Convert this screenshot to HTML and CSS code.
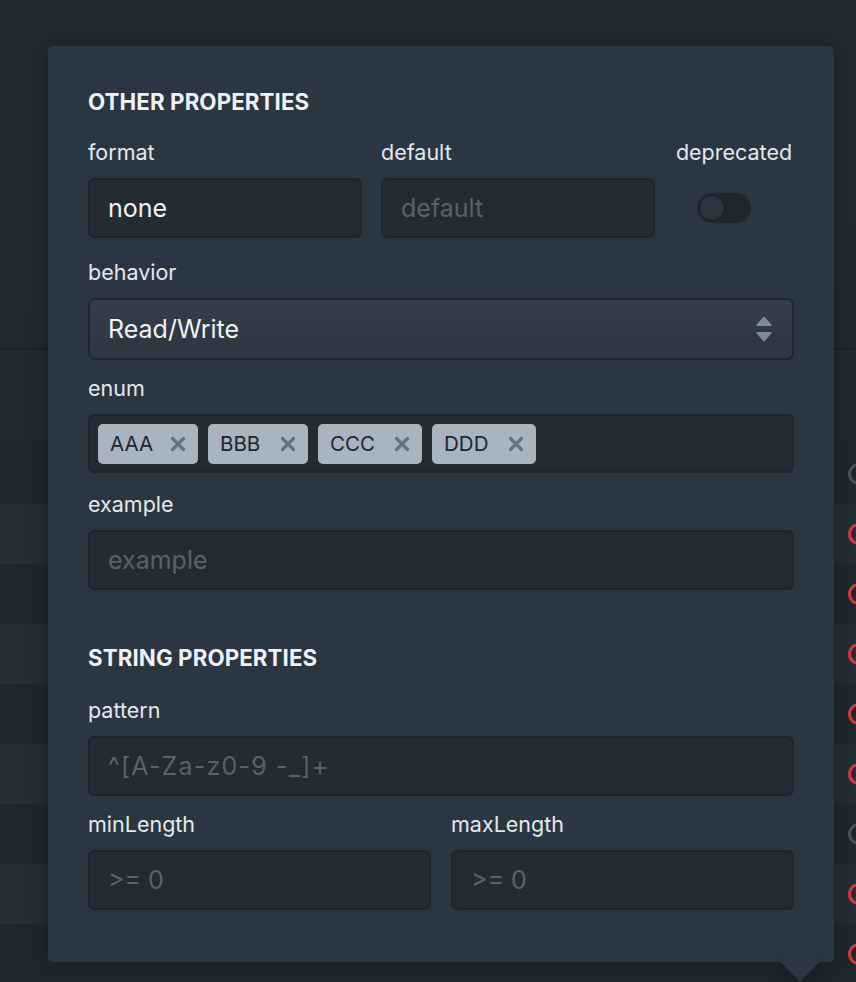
FILE: index.html
```html
<!DOCTYPE html>
<html>
<head>
<meta charset="utf-8">
<link rel="stylesheet" href="styles.css">
</head>
<body>
<div class="backdrop">
  <div class="bg-top"></div>
  <div class="bg-sub"></div>
  <div class="row dark"><span class="dot grey"></span></div>
  <div class="row light"><span class="dot red"></span></div>
  <div class="row dark"><span class="dot red"></span></div>
  <div class="row light"><span class="dot red"></span></div>
  <div class="row dark"><span class="dot red"></span></div>
  <div class="row light"><span class="dot red"></span></div>
  <div class="row dark"><span class="dot grey"></span></div>
  <div class="row light"><span class="dot red"></span></div>
  <div class="row dark"><span class="dot red"></span></div>
</div>

<div class="popover">
  <h2 class="section-title first">OTHER PROPERTIES</h2>

  <div class="grid3 gap-after-top">
    <div class="field">
      <label class="label">format</label>
      <div class="input"><span class="value">none</span></div>
    </div>
    <div class="field">
      <label class="label">default</label>
      <div class="input"><span class="placeholder">default</span></div>
    </div>
    <div class="field center">
      <label class="label">deprecated</label>
      <div class="toggle-wrap"><span class="toggle"><span class="knob"></span></span></div>
    </div>
  </div>

  <div class="field gap-after-select">
    <label class="label">behavior</label>
    <div class="select">
      <span class="value">Read/Write</span>
      <svg class="updown" width="16" height="26" viewBox="0 0 16 26">
        <path d="M7 1.2 Q8 0.2 9 1.2 L15.3 8.6 Q16 10 14.4 10 L1.6 10 Q0 10 0.7 8.6 Z" fill="#7d8b99"/>
        <path d="M7 24.8 Q8 25.8 9 24.8 L15.3 17.4 Q16 16 14.4 16 L1.6 16 Q0 16 0.7 17.4 Z" fill="#7d8b99"/>
      </svg>
    </div>
  </div>

  <div class="field gap-after-enum">
    <label class="label">enum</label>
    <div class="tags">
      <span class="tag">AAA<svg class="x" viewBox="0 0 16 16" width="16" height="16"><path d="M2.5 2.5 L13.5 13.5 M13.5 2.5 L2.5 13.5" stroke="#667280" stroke-width="3.2" stroke-linecap="round"/></svg></span>
      <span class="tag">BBB<svg class="x" viewBox="0 0 16 16" width="16" height="16"><path d="M2.5 2.5 L13.5 13.5 M13.5 2.5 L2.5 13.5" stroke="#667280" stroke-width="3.2" stroke-linecap="round"/></svg></span>
      <span class="tag wide">CCC<svg class="x" viewBox="0 0 16 16" width="16" height="16"><path d="M2.5 2.5 L13.5 13.5 M13.5 2.5 L2.5 13.5" stroke="#667280" stroke-width="3.2" stroke-linecap="round"/></svg></span>
      <span class="tag wide">DDD<svg class="x" viewBox="0 0 16 16" width="16" height="16"><path d="M2.5 2.5 L13.5 13.5 M13.5 2.5 L2.5 13.5" stroke="#667280" stroke-width="3.2" stroke-linecap="round"/></svg></span>
    </div>
  </div>

  <div class="field">
    <label class="label">example</label>
    <div class="input"><span class="placeholder">example</span></div>
  </div>

  <h2 class="section-title second">STRING PROPERTIES</h2>

  <div class="field gap-after-pattern">
    <label class="label">pattern</label>
    <div class="input"><span class="placeholder pattern">^[A-Za-z0-9 -_]+</span></div>
  </div>

  <div class="grid2">
    <div class="field">
      <label class="label">minLength</label>
      <div class="input"><span class="placeholder">&gt;= 0</span></div>
    </div>
    <div class="field">
      <label class="label">maxLength</label>
      <div class="input"><span class="placeholder">&gt;= 0</span></div>
    </div>
  </div>

  <span class="arrow"></span>
</div>
</body>
</html>
```

FILE: styles.css
```css
* { box-sizing: border-box; }

html, body {
  margin: 0;
  padding: 0;
  width: 856px;
  height: 982px;
  overflow: hidden;
  background: #212a33;
  font-family: Inter, "Noto Sans", sans-serif;
}

.backdrop {
  width: 856px;
}

.bg-top {
  height: 350px;
  background: linear-gradient(#222b34, #212a33);
  border-bottom: 2px solid #1b2229;
}

.bg-sub {
  height: 94px;
  background: #212a32;
}

.row {
  height: 60px;
  display: flex;
  align-items: center;
  justify-content: flex-end;
}

.row.dark { background: #20282f; }
.row.light { background: #262f36; }

.dot {
  width: 22px;
  height: 22px;
  border-radius: 50%;
  border: 3px solid #4a535c;
  margin-right: -14px;
}

.dot.red { border-color: #e0373d; }
.dot.grey { border-color: #4a535c; }

.popover {
  position: absolute;
  left: 48px;
  top: 46px;
  width: 786px;
  height: 916px;
  background: #2a3641;
  border-radius: 5px;
  padding: 44px 40px 0;
  box-shadow: 0 0 22px rgba(10, 14, 18, 0.45);
}

.section-title {
  margin: 0;
  font-size: 22.3px;
  line-height: 24px;
  font-weight: 700;
  color: #eef2f5;
  letter-spacing: 0.1px;
}

.section-title.first { margin-bottom: 26px; }
.section-title.second { margin-top: 56px; margin-bottom: 28px; }

.field {
  display: flex;
  flex-direction: column;
}

.field.center { align-items: center; }

.label {
  font-size: 21.5px;
  line-height: 24px;
  color: #e4e9ed;
  margin-bottom: 14px;
}

.grid3 {
  display: grid;
  grid-template-columns: 274px 274px 1fr;
  column-gap: 19px;
}

.grid2 {
  display: grid;
  grid-template-columns: 1fr 1fr;
  column-gap: 20px;
}

.gap-after-top { margin-bottom: 22px; }
.gap-after-select { margin-bottom: 16px; }
.gap-after-enum { margin-bottom: 19px; }
.gap-after-pattern { margin-bottom: 16px; }

.input {
  height: 60px;
  background: #232b33;
  border: 2px solid #1e252c;
  border-radius: 6px;
  display: flex;
  align-items: center;
  padding: 0 18px;
}

.value { color: #f0f3f5; font-size: 25px; }
.placeholder { color: #56636f; font-size: 25px; }
.placeholder.pattern { letter-spacing: 1.2px; }

.toggle-wrap {
  height: 60px;
  display: flex;
  align-items: center;
  align-self: flex-start;
  margin-left: 23px;
}

.toggle {
  width: 54px;
  height: 30px;
  border-radius: 15px;
  background: #1f262d;
  display: flex;
  align-items: center;
  padding: 0 2px;
}

.knob {
  width: 26px;
  height: 26px;
  border-radius: 50%;
  background: #2b3540;
  border: 1px solid #1a2026;
}

.select {
  height: 62px;
  border: 2px solid #1f262d;
  border-radius: 7px;
  background: linear-gradient(#343f4a, #2c3640);
  display: flex;
  align-items: center;
  justify-content: space-between;
  padding: 0 20px 0 18px;
}

.updown { display: block; }

.tags {
  height: 59px;
  background: #232b33;
  border: 2px solid #1e252c;
  border-radius: 6px;
  display: flex;
  align-items: center;
  gap: 10px;
  padding: 0 8px;
}

.tag {
  height: 40px;
  min-width: 100px;
  background: #a8b4c0;
  border-radius: 5px;
  display: flex;
  align-items: center;
  justify-content: space-between;
  padding: 0 12px;
  gap: 17px;
  font-size: 20.5px;
  color: #1d262e;
}

.tag.wide { min-width: 104px; }

.x { display: block; }

.arrow {
  position: absolute;
  left: 738px;
  bottom: -14px;
  width: 28px;
  height: 28px;
  background: #2a3641;
  transform: rotate(45deg);
  box-shadow: 6px 6px 12px rgba(10, 14, 18, 0.3);
}
```
